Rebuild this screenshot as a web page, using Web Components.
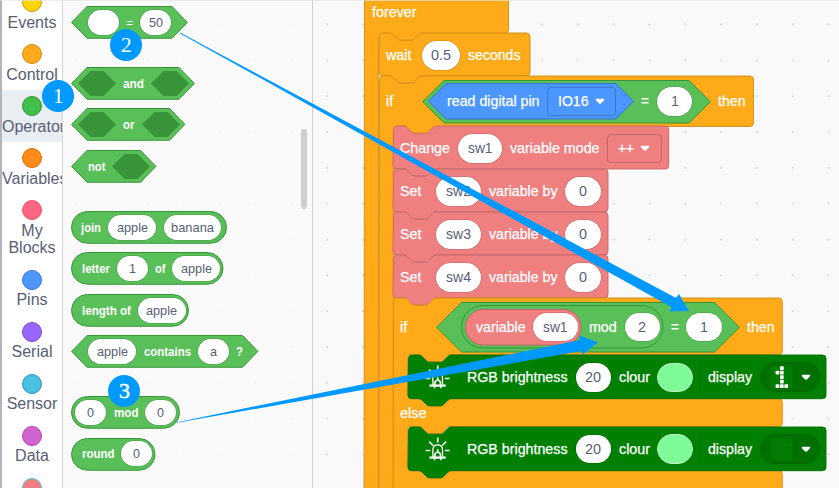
<!DOCTYPE html>
<html lang="en">
<head>
<meta charset="utf-8">
<title>Block editor</title>
<style>
html,body{margin:0;width:839px;height:488px;overflow:hidden;background:#f9f9f9;font-family:"Liberation Sans",Arial,sans-serif}
</style>
</head>
<body>
<block-editor>
  <category-list slot="categories">
    <category-item color="#ffd500" edge="#cc9900">Events</category-item>
    <category-item color="#ffab19" edge="#cf8b17">Control</category-item>
    <category-item color="#40bf4a" edge="#389438" selected>Operators</category-item>
    <category-item color="#ff8c1a" edge="#db6e00">Variables</category-item>
    <category-item color="#ff6680" edge="#ff4d6a">My<br>Blocks</category-item>
    <category-item color="#4c97ff" edge="#3373cc">Pins</category-item>
    <category-item color="#9966ff" edge="#774dcb">Serial</category-item>
    <category-item color="#4cbfe6" edge="#2e8eb8">Sensor</category-item>
    <category-item color="#cf63cf" edge="#bd42bd">Data</category-item>
    <category-item color="#f08080" edge="#4cbfe6"></category-item>
  </category-list>

  <block-palette slot="palette">
    <block-group>
      <value-block shape="hex" w="117"><value-field g="17" w="31"></value-field><block-label g="7" w="7" light>=</block-label><value-field g="7" w="31" t="14">50</value-field></value-block>
    </block-group>
    <block-group>
      <value-block shape="hex" w="124"><bool-slot g="7"></bool-slot><block-label g="7" w="21">and</block-label><bool-slot g="7"></bool-slot></value-block>
      <value-block shape="hex" w="114.5"><bool-slot g="7"></bool-slot><block-label g="7" w="11.5">or</block-label><bool-slot g="7"></bool-slot></value-block>
      <value-block shape="hex" w="85.5"><block-label g="17" w="17.5">not</block-label><bool-slot g="6.5"></bool-slot></value-block>
    </block-group>
    <block-group>
      <value-block shape="round" w="156"><block-label g="10" w="20">join</block-label><value-field g="7" w="48" t="31">apple</value-field><value-field g="7.5" w="57.5" t="43">banana</value-field></value-block>
      <value-block shape="round" w="152.5"><block-label g="10.5" w="28">letter</block-label><value-field g="7" w="31" t="7">1</value-field><block-label g="7.5" w="10.5">of</block-label><value-field g="6.5" w="48" t="31">apple</value-field></value-block>
      <value-block shape="round" w="118"><block-label g="10.5" w="49">length of</block-label><value-field g="7" w="48" t="31">apple</value-field></value-block>
      <value-block shape="hex" w="187.5"><value-field g="17" w="48" t="31">apple</value-field><block-label g="7.5" w="47">contains</block-label><value-field g="7" w="31" t="7">a</value-field><block-label g="7.5" w="7">?</block-label></value-block>
    </block-group>
    <block-group>
      <value-block shape="round" w="109"><value-field g="4" w="31" t="7">0</value-field><block-label g="7.5" w="24.5">mod</block-label><value-field g="7" w="31" t="7">0</value-field></value-block>
      <value-block shape="round" w="84.5"><block-label g="10.5" w="32.5">round</block-label><value-field g="7" w="31" t="7">0</value-field></value-block>
    </block-group>
  </block-palette>

  <block-canvas slot="canvas">
    <stack-block kind="control" w="144.5" head="44.3" mouths="520" bars="20" lead="3.6">
      <block-label slot="head" g="8" w="44.5">forever</block-label>
      <stack-block slot="mouth0" kind="control" w="151" head="43" lead="2">
        <block-label slot="head" g="7.5" w="25.5">wait</block-label><value-field slot="head" g="10" w="38.5" t="20">0.5</value-field><block-label slot="head" g="8" w="52.5">seconds</block-label>
      </stack-block>
      <stack-block slot="mouth0" kind="control" w="374.5" head="50.5" mouths="420" bars="20">
        <block-label slot="head" g="7.5" w="7.2">if</block-label>
        <value-block slot="head" shape="hex" g="28.5" w="289" h="43.5" slant="22">
          <value-block shape="hex" kind="pins" g="6.5" w="206" h="36.5" slant="18">
            <block-label g="19" w="92.5">read digital pin</block-label>
            <drop-down g="7" w="69.5" t="30.5">IO16</drop-down>
          </value-block>
          <block-label g="7" w="8">=</block-label>
          <value-field g="7.5" w="35.5" t="8">1</value-field>
        </value-block>
        <block-label slot="head" g="7" w="27.5">then</block-label>

        <stack-block slot="mouth0" kind="custom" w="275.7" head="43">
          <block-label slot="head" g="7" w="50">Change</block-label><value-field slot="head" g="7.7" w="44.5" t="24.5">sw1</value-field><block-label slot="head" g="8" w="89.5">variable mode</block-label><drop-down slot="head" g="7.3" w="54.7" t="16">++</drop-down>
        </stack-block>
        <stack-block slot="mouth0" kind="custom" w="215" head="43">
          <block-label slot="head" g="7" w="21.5">Set</block-label><value-field slot="head" g="14.7" w="44.5" t="25">sw2</value-field><block-label slot="head" g="8" w="68.5">variable by</block-label><value-field slot="head" g="8" w="35.3" t="8">0</value-field>
        </stack-block>
        <stack-block slot="mouth0" kind="custom" w="215" head="43">
          <block-label slot="head" g="7" w="21.5">Set</block-label><value-field slot="head" g="14.7" w="44.5" t="25">sw3</value-field><block-label slot="head" g="8" w="68.5">variable by</block-label><value-field slot="head" g="8" w="35.3" t="8">0</value-field>
        </stack-block>
        <stack-block slot="mouth0" kind="custom" w="215" head="43">
          <block-label slot="head" g="7" w="21.5">Set</block-label><value-field slot="head" g="14.7" w="44.5" t="25">sw4</value-field><block-label slot="head" g="8" w="68.5">variable by</block-label><value-field slot="head" g="8" w="35.3" t="8">0</value-field>
        </stack-block>
        <stack-block slot="mouth0" kind="control" w="389.3" head="56.7" mouths="43.7,43.7" bars="28,60">
          <block-label slot="head" g="7" w="7.5">if</block-label>
          <value-block slot="head" shape="hex" g="28.5" w="304" h="50.5" slant="25.5">
            <value-block shape="round" g="25" w="202.5" h="43.5">
              <value-block shape="round" kind="custom" g="4" w="116.5" h="36.5">
                <block-label g="10.5" w="49.5">variable</block-label><value-field g="8" w="44.5" t="24.5">sw1</value-field>
              </value-block>
              <block-label g="7.3" w="27.7">mod</block-label><value-field g="8" w="35.5" t="8">2</value-field>
            </value-block>
            <block-label g="7" w="8">=</block-label><value-field g="7.5" w="35.5" t="8">1</value-field>
          </value-block>
          <block-label slot="head" g="7.3" w="27.5">then</block-label>

          <stack-block slot="mouth0" kind="rgb" w="418" head="43.7">
            <led-icon slot="head" g="17"></led-icon><block-label slot="head" g="17.5" w="100.5">RGB brightness</block-label><value-field slot="head" g="8" w="35.3" t="16">20</value-field><block-label slot="head" g="7.7" w="31">clour</block-label><color-swatch slot="head" g="7"></color-swatch><block-label slot="head" g="7" w="44" ruled>display</block-label><matrix-picker slot="head" g="7.5" pixels="00100 01100 00100 00100 01110"></matrix-picker>
          </stack-block>
          <block-label slot="bar0" g="7" w="26.5">else</block-label>
          <stack-block slot="mouth1" kind="rgb" w="418" head="43.7">
            <led-icon slot="head" g="17"></led-icon><block-label slot="head" g="17.5" w="100.5">RGB brightness</block-label><value-field slot="head" g="8" w="35.3" t="16">20</value-field><block-label slot="head" g="7.7" w="31">clour</block-label><color-swatch slot="head" g="7"></color-swatch><block-label slot="head" g="7" w="44" ruled>display</block-label><matrix-picker slot="head" g="7.5" pixels="00000 00000 00000 00000 00000"></matrix-picker>
          </stack-block>
        </stack-block>
      </stack-block>
    </stack-block>
  </block-canvas>

  <guide-layer slot="guides">
    <step-badge style="left:42.3px;top:80px">1</step-badge>
    <step-badge style="left:110.2px;top:29px">2</step-badge>
    <step-badge style="left:108.4px;top:375px" strong>3</step-badge>
  </guide-layer>
</block-editor>

<script>
const KINDS = {
  operator: ['#59c059', '#389438'],
  control: ['#ffab19', '#cf8b17'],
  pins: ['#4c97ff', '#3373cc'],
  custom: ['#f08080', '#c06666'],
  rgb: ['#008000', '#006a00']
};
const num = (el, name, fallback = 0) => el.hasAttribute(name) ? parseFloat(el.getAttribute(name)) : fallback;

class Base extends HTMLElement {
  connectedCallback() {
    if (this.shadowRoot) return;
    this.attachShadow({ mode: 'open' }).innerHTML = this.view();
    this.ready();
  }
  ready() {}
}

class BlockEditor extends Base {
  view() {
    return `<style>
      :host{display:grid;grid-template-columns:62px 251px 1fr;position:relative;width:839px;height:488px;overflow:hidden;
        background:radial-gradient(circle at 50% 50%,#dcdcdc 0 .9px,transparent 1.4px) -13.3px 6.6px/35.84px 35.84px #f9f9f9}
      :host::after{content:"";position:absolute;left:0;top:0;width:100%;height:1px;background:rgba(228,228,228,.65)}
    </style><slot name="categories"></slot><slot name="palette"></slot><slot name="canvas"></slot><slot name="guides"></slot>`;
  }
}

class CategoryList extends Base {
  view() {
    return `<style>:host{display:flex;flex-direction:column;box-sizing:border-box;height:488px;overflow:hidden;background:#fff;border-left:2px solid #b1b4ba}
      div{margin-top:-14px}</style><div><slot></slot></div>`;
  }
}

class CategoryItem extends Base {
  view() {
    const bg = this.hasAttribute('selected') ? '#e9eef2' : 'transparent';
    return `<style>
      :host{display:flex;flex-direction:column;align-items:center;box-sizing:border-box;min-height:52px;padding:6px 0 6.6px;background:${bg};
        color:#575e75;font-size:16px;line-height:17.7px;text-align:center}
      i{box-sizing:border-box;width:20px;height:20px;border-radius:50%;border:1px solid ${this.getAttribute('edge')};background:${this.getAttribute('color')}}
      span{width:60px;margin-top:1.7px;white-space:nowrap}
    </style><i></i><span><slot></slot></span>`;
  }
}

class BlockPalette extends Base {
  view() {
    return `<style>
      :host{display:flex;flex-direction:column;gap:28.2px;position:relative;box-sizing:border-box;height:488px;padding:5.8px 0 0 8px;overflow:hidden;
        background:rgba(249,249,249,.88);border-left:1px solid #d4d4d6;border-right:1px solid #cfcfcf;font-size:13.3px;font-weight:700;--fh:25px;--fs:13.3px}
      b{position:absolute;right:5px;top:129px;width:6px;height:80px;border-radius:3px;background:#cecece}
    </style><slot></slot><b></b>`;
  }
}

class BlockGroup extends Base {
  view() {
    return `<style>:host{display:flex;flex-direction:column;align-items:flex-start;gap:8.75px}</style><slot></slot>`;
  }
}

class BlockCanvas extends Base {
  view() {
    return `<style>
      :host{display:block;box-sizing:border-box;height:488px;padding:0 0 0 51.4px;overflow:hidden;font-size:14.4px;--fh:28.5px;--fs:14.4px;--stroke:.25px}
      div{margin-top:-11.5px}
    </style><div><slot></slot></div>`;
  }
}

/* A reporter or boolean block: a hexagon or a capsule around its parts. */
class ValueBlock extends Base {
  view() {
    const w = num(this, 'w'), h = num(this, 'h', 32.75), s = num(this, 'slant', 16);
    const [fill, edge] = KINDS[this.getAttribute('kind') || 'operator'];
    const shape = this.getAttribute('shape') === 'hex'
      ? `<path d="M${s} .5H${w - s}L${w - .6} ${h / 2}L${w - s} ${h - .5}H${s}L.6 ${h / 2}Z"/>`
      : `<rect x=".5" y=".5" width="${w - 1}" height="${h - 1}" rx="${(h - 1) / 2}"/>`;
    return `<style>
      :host{display:flex;align-items:center;position:relative;flex:none;width:${w}px;height:${h}px;margin-left:${num(this, 'g')}px}
      svg{position:absolute;left:0;top:0;width:100%;height:100%;overflow:visible;z-index:0}
    </style><svg fill="${fill}" stroke="${edge}">${shape}</svg><slot></slot>`;
  }
}

/* A command block. Mouths hold nested stacks; a bar closes each mouth. */
class StackBlock extends Base {
  view() {
    const w = num(this, 'w'), head = num(this, 'head'), inset = 14.4, r = 3.6;
    const list = n => (this.getAttribute(n) || '').split(',').filter(Boolean).map(Number);
    const mouths = list('mouths'), bars = list('bars');
    const [fill, edge] = KINDS[this.getAttribute('kind')];
    const notchIn = 'c1.8 0 2.7 .9 3.6 1.8l3.6 3.6c.9 .9 1.8 1.8 3.6 1.8h10.8c1.8 0 2.7 -.9 3.6 -1.8l3.6 -3.6c.9 -.9 1.8 -1.8 3.6 -1.8';
    const notchBack = 'c-1.8 0 -2.7 .9 -3.6 1.8l-3.6 3.6c-.9 .9 -1.8 1.8 -3.6 1.8h-10.8c-1.8 0 -2.7 -.9 -3.6 -1.8l-3.6 -3.6c-.9 -.9 -1.8 -1.8 -3.6 -1.8';
    const nw = 32.4;
    let d = `M.5 ${r}a${r} ${r} 0 0 1 ${r} -${r}H10.8${notchIn}H${w - r}a${r} ${r} 0 0 1 ${r} ${r}`;
    let y = head;
    mouths.forEach((m, i) => {
      d += `V${y - r}a${r} ${r} 0 0 1 -${r} ${r}H${inset + 10.8 + nw}${notchBack}H${inset + r}a${r} ${r} 0 0 0 -${r} ${r}`;
      y += m;
      d += `V${y - r}a${r} ${r} 0 0 0 ${r} ${r}H${w - r}a${r} ${r} 0 0 1 ${r} ${r}`;
      y += bars[i];
    });
    d += `V${y - r}a${r} ${r} 0 0 1 -${r} ${r}H${10.8 + nw}${notchBack}H${r}a${r} ${r} 0 0 1 -${r} -${r}Z`;
    const parts = mouths.map((m, i) =>
      `<div class="mouth" style="height:${m}px"><slot name="mouth${i}"></slot></div><div class="row" style="height:${bars[i]}px"><slot name="bar${i}"></slot></div>`).join('');
    return `<style>
      :host{display:block;position:relative;width:${w}px;color:#fff}
      svg{position:absolute;left:0;top:0;width:100%;height:${y}px;overflow:visible}
      .row{display:flex;align-items:center;position:relative;box-sizing:border-box;padding-top:1px}
      .head{height:${head}px;padding-top:${num(this, 'lead', 1)}px}
      .mouth{margin-left:${inset}px;position:relative}
    </style><svg fill="${fill}" stroke="${edge}" stroke-width=".9"><path d="${d}"/></svg><div class="row head"><slot name="head"></slot></div>${parts}`;
  }
}

/* Runs text at an exact advance width. */
const fit = (root, width) => {
  const s = root.querySelector('span');
  const natural = s.getBoundingClientRect().width;
  if (natural && width) s.style.transform = `scaleX(${width / natural})`;
};

class BlockLabel extends Base {
  view() {
    const rule = this.hasAttribute('ruled') ? '<i></i>' : '';
    return `<style>
      :host{display:block;position:relative;flex:none;width:${num(this, 'w')}px;margin-left:${num(this, 'g')}px;color:#fff;white-space:nowrap;line-height:17px;-webkit-text-stroke:var(--stroke,0) #fff}
      :host([ruled]){margin-left:15px}
      :host([light]){font-weight:400}
      i{position:absolute;left:-8px;top:-9px;width:1px;height:35px;background:#007200}
      span{display:inline-block;transform-origin:0 50%}
    </style>${rule}<span><slot></slot></span>`;
  }
  ready() { fit(this.shadowRoot, num(this, 'w')); }
}

class ValueField extends Base {
  view() {
    return `<style>
      :host{display:flex;align-items:center;box-sizing:border-box;position:relative;flex:none;width:${num(this, 'w')}px;height:var(--fh);margin-left:${num(this, 'g')}px;
        padding-left:${(num(this, 'w') - num(this, 't')) / 2}px;border-radius:99px;background:#fff;box-shadow:0 0 0 .6px rgba(0,0,0,.2);color:#575e75;font-size:var(--fs);font-weight:400;white-space:nowrap;line-height:17px}
      span{display:inline-block;transform-origin:0 50%}
    </style><span><slot></slot></span>`;
  }
  ready() { fit(this.shadowRoot, num(this, 't')); }
}

class BoolSlot extends Base {
  view() {
    return `<style>:host{display:block;position:relative;flex:none;width:38px;height:25px;margin-left:${num(this, 'g')}px}
      svg{display:block}</style><svg width="38" height="25" fill="#389438"><path d="M12.5 0H25.5L38 12.5L25.5 25H12.5L0 12.5Z"/></svg>`;
  }
}

const CARET = `<svg class="caret" width="10" height="7" viewBox="0 0 10 7"><path d="M1.2 .8H8.8Q9.8 1.2 9 2.2L5.8 5.6Q5 6.3 4.2 5.6L1 2.2Q.2 1.2 1.2 .8Z" fill="#fff"/></svg>`;

class DropDown extends Base {
  view() {
    return `<style>
      :host{display:flex;align-items:center;justify-content:space-between;box-sizing:border-box;position:relative;flex:none;width:${num(this, 'w')}px;height:29.5px;
        margin-left:${num(this, 'g')}px;padding:0 10.5px 0 10px;border:1px solid rgba(0,0,0,.2);border-radius:4px;color:#fff;white-space:nowrap;line-height:17px;-webkit-text-stroke:.25px #fff}
      span{display:inline-block;transform-origin:0 50%}
    </style><span><slot></slot></span>${CARET}`;
  }
  ready() { fit(this.shadowRoot, num(this, 't')); }
}

class ColorSwatch extends Base {
  view() {
    return `<style>:host{display:block;box-sizing:border-box;position:relative;flex:none;width:36.7px;height:29.5px;margin-left:${num(this, 'g')}px;
      border:1px solid #c5eccb;border-radius:15px;background:#7dfb98}</style>`;
  }
}

class MatrixPicker extends Base {
  view() {
    const cells = this.getAttribute('pixels').split(' ').flatMap((row, y) =>
      [...row].map((on, x) => `<rect x="${(x * 4.4 + .2).toFixed(1)}" y="${(y * 4.5 + .2).toFixed(1)}" width="3.7" height="3.7" rx=".5" fill="${on === '1' ? '#fff' : '#008000'}"/>`)).join('');
    return `<style>
      :host{display:flex;align-items:center;box-sizing:border-box;position:relative;flex:none;width:60px;height:30px;margin-left:${num(this, 'g')}px;
        padding-left:10.7px;border:1px solid #006500;border-radius:15px;background:#007000}
      .caret{margin-left:7.8px}
    </style><svg width="22" height="22.5">${cells}</svg>${CARET}`;
  }
}

class LedIcon extends Base {
  view() {
    return `<style>:host{display:block;position:relative;flex:none;width:25px;height:25px;margin-left:${num(this, 'g')}px}svg{display:block}</style>
    <svg width="25" height="25" viewBox="0 0 25 25" fill="none" stroke="#fff" stroke-width="1.6">
      <path d="M12.7 .5V5.6M4.2 4.6L8.1 8.5M21.2 4.6L17.3 8.5M.6 13.5H5.3M19.9 13.5H24.6"/>
      <path d="M7.9 20.5V12.3Q8.1 7.8 12.7 7.8Q17.3 7.8 17.5 12.3V20.5" stroke-width="1.3"/>
      <path d="M10 20.5V16.8L12.7 14.5L15.4 16.8V20.5M12.7 12.3V14.5"/>
      <path d="M4.5 20.6H20.8" stroke-width="2.2"/><path d="M9.6 21V23.3M15.8 21V23.3"/>
    </svg>`;
  }
}

class GuideLayer extends Base {
  view() {
    return `<style>:host{display:block;position:absolute;left:0;top:0;width:839px;height:488px;pointer-events:none}svg{position:absolute;left:0;top:0}</style>
    <svg width="839" height="488" fill="#0099ff">
      <path d="M180 32.6L676 298L679 294L688.8 311L669.2 311.4L671.7 307.2L180 33.4Z"/>
      <path d="M177 422.2L580.3 340L579 335.5L598 342.2L582.4 354.8L581.3 351L177 422.8Z"/>
    </svg><slot></slot>`;
  }
}

class StepBadge extends Base {
  view() {
    return `<style>:host{display:flex;align-items:center;justify-content:center;position:absolute;box-sizing:border-box;width:32px;height:32px;border-radius:50%;background:#0099ff;
      color:#fff;font:22px/32px "Liberation Serif","Times New Roman",serif}:host([strong]){-webkit-text-stroke:.5px #fff}</style><slot></slot>`;
  }
}

const elements = {
  'block-editor': BlockEditor, 'category-list': CategoryList, 'category-item': CategoryItem,
  'block-palette': BlockPalette, 'block-group': BlockGroup, 'block-canvas': BlockCanvas,
  'stack-block': StackBlock, 'value-block': ValueBlock, 'bool-slot': BoolSlot,
  'color-swatch': ColorSwatch, 'matrix-picker': MatrixPicker, 'led-icon': LedIcon,
  'guide-layer': GuideLayer, 'step-badge': StepBadge,
  'block-label': BlockLabel, 'value-field': ValueField, 'drop-down': DropDown
};
for (const [name, cls] of Object.entries(elements)) customElements.define(name, cls);
</script>
</body>
</html>
